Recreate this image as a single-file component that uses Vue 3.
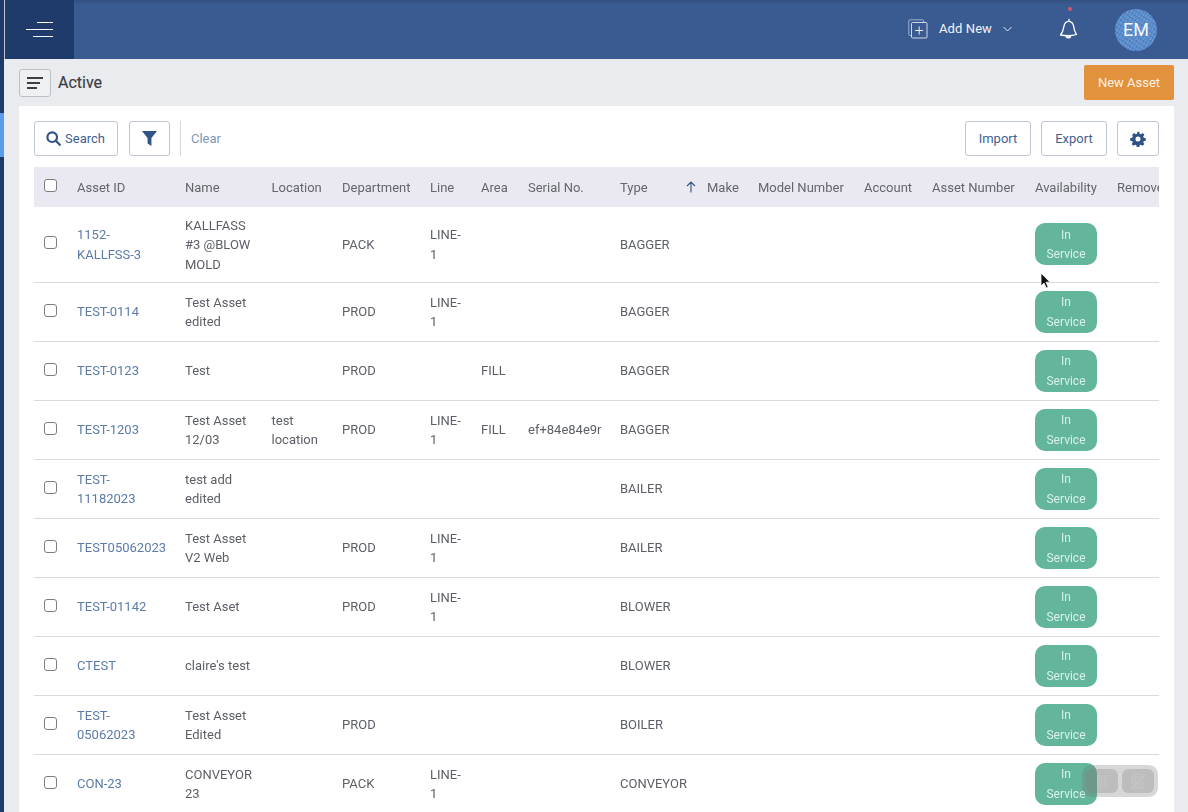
<script setup>
const columns = [
  { label: 'Asset ID', width: 108 },
  { label: 'Name', width: 86.5 },
  { label: 'Location', width: 70.5 },
  { label: 'Department', width: 88 },
  { label: 'Line', width: 51 },
  { label: 'Area', width: 47 },
  { label: 'Serial No.', width: 92 },
  { label: 'Type', width: 71 },
  { label: 'Make', width: 67, sorted: true },
  { label: 'Model Number', width: 106 },
  { label: 'Account', width: 68 },
  { label: 'Asset Number', width: 103 },
  { label: 'Availability', width: 82 },
  { label: 'Remove', width: 100 }
]
const rows = [
  { id: '1152-KALLFSS-3', name: 'KALLFASS #3 @BLOW MOLD', dept: 'PACK', line: 'LINE-1', type: 'BAGGER' },
  { id: 'TEST-0114', name: 'Test Asset edited', dept: 'PROD', line: 'LINE-1', type: 'BAGGER' },
  { id: 'TEST-0123', name: 'Test', dept: 'PROD', area: 'FILL', type: 'BAGGER' },
  { id: 'TEST-1203', name: 'Test Asset 12/03', location: 'test location', dept: 'PROD', line: 'LINE-1', area: 'FILL', serial: 'ef+84e84e9r', type: 'BAGGER' },
  { id: 'TEST-11182023', name: 'test add edited', type: 'BAILER' },
  { id: 'TEST05062023', name: 'Test Asset V2 Web', dept: 'PROD', line: 'LINE-1', type: 'BAILER' },
  { id: 'TEST-01142', name: 'Test Aset', dept: 'PROD', line: 'LINE-1', type: 'BLOWER' },
  { id: 'CTEST', name: "claire's test", type: 'BLOWER' },
  { id: 'TEST-05062023', name: 'Test Asset Edited', dept: 'PROD', type: 'BOILER' },
  { id: 'CON-23', name: 'CONVEYOR 23', dept: 'PACK', line: 'LINE-1', type: 'CONVEYOR' }
]
</script>

<template>
  <div class="app">
    <div class="rail"><div class="rail-active"></div></div>
    <div class="main">
      <header class="topbar">
        <button class="burger" aria-label="Menu">
          <span class="b1"></span><span class="b2"></span><span class="b3"></span>
        </button>
        <div class="top-right">
          <div class="add-new">
            <svg width="20" height="20" viewBox="0 0 20 20" fill="none" stroke="#cfd8e6" stroke-width="1">
              <path d="M3.500 16.500H1.800a1 1 0 0 1-1-1V1.800a1 1 0 0 1 1-1h12.700a1 1 0 0 1 1 1v1.700" stroke="#9fb0ca" />
              <rect x="3.500" y="3.500" width="15.500" height="15.500" rx="1" />
              <path d="M11.200 7.500v8M7.200 11.500h8" stroke="#e8edf5" />
            </svg>
            <span class="add-text">Add New</span>
            <svg class="chev" width="9" height="6" viewBox="0 0 9 6" fill="none" stroke="#dfe6f1" stroke-width="1"><path d="M.5 1l4 4 4-4" /></svg>
          </div>
          <div class="bell">
            <span class="bell-dot"></span>
            <svg width="19" height="22" viewBox="0 0 19 22" fill="none" stroke="#fff" stroke-width="1.300" stroke-linejoin="round">
              <path d="M10 1.500v1.800c2.900.4 4.300 2.400 4.700 5.300.4 3 1 5.600 2.800 7.900-4.500 1.300-10.500 1.500-16 .5 1.900-2.300 2.800-5 3.300-8.200C5.300 5.700 7.300 3.200 10 3.300z" />
              <path d="M7 18.300c1.100 1.700 3.400 1.700 4.600-.2" stroke-width="2" />
            </svg>
          </div>
          <div class="avatar">EM</div>
        </div>
      </header>

      <section class="content">
        <div class="title-row">
          <div class="title-left">
            <button class="toggle" aria-label="Toggle list">
              <span class="t1"></span><span class="t2"></span><span class="t3"></span>
            </button>
            <h1>Active</h1>
          </div>
          <button class="new-asset">New Asset</button>
        </div>

        <div class="panel">
          <div class="toolbar">
            <button class="btn search-btn">
              <svg width="15" height="15" viewBox="0 0 15 15" fill="none" stroke="#2f5288" stroke-width="2.200"><circle cx="6.200" cy="6.200" r="4.800" /><path d="M9.800 9.800l4 4" stroke-linecap="round" /></svg>
              <span>Search</span>
            </button>
            <button class="btn filter-btn" aria-label="Filter">
              <svg width="15" height="15" viewBox="0 0 14 14" fill="#2f5288"><path d="M0 0h14L8.800 6.600V14L5.200 11.600V6.600z" /></svg>
            </button>
            <span class="divider"></span>
            <a class="clear">Clear</a>
            <span class="spacer"></span>
            <button class="btn import-btn">Import</button>
            <button class="btn export-btn">Export</button>
            <button class="btn gear-btn" aria-label="Settings">
              <svg width="16" height="16" viewBox="0 0 24 24" fill="#2f5288"><path fill-rule="evenodd" d="M13.900 1l.5 3c.7.2 1.400.5 2 .9l2.500-1.800 2.700 2.700-1.800 2.500c.4.6.7 1.300.9 2l3 .5v3.800l-3 .5c-.2.7-.5 1.400-.9 2l1.800 2.500-2.700 2.700-2.500-1.800c-.6.4-1.300.7-2 .9l-.5 3h-3.800l-.5-3c-.7-.2-1.400-.5-2-.9l-2.500 1.800-2.700-2.700 1.800-2.500c-.4-.6-.7-1.300-.9-2l-3-.5v-3.800l3-.5c.2-.7.5-1.400.9-2L3.400 5.800l2.700-2.700 2.500 1.800c.6-.4 1.300-.7 2-.9l.5-3zM12 8.200a3.800 3.800 0 1 0 0 7.600 3.800 3.800 0 0 0 0-7.600z" /></svg>
            </button>
          </div>

          <div class="table-wrap">
            <table class="grid">
              <colgroup>
                <col class="check-col" />
                <col v-for="c in columns" :key="c.label" :width="c.width" />
              </colgroup>
              <thead>
                <tr>
                  <th class="check-cell"><span class="checkbox"></span></th>
                  <th v-for="c in columns" :key="c.label">
                    <span v-if="c.sorted" class="sort-arrow">
                      <svg width="10" height="12" viewBox="0 0 10 12" fill="none" stroke="#2f5288" stroke-width="1.100"><path d="M5 11.500V1M1 5l4-4 4 4" /></svg>
                    </span>{{ c.label }}
                  </th>
                </tr>
              </thead>
              <tbody>
                <tr v-for="r in rows" :key="r.id">
                  <td class="check-cell"><span class="checkbox"></span></td>
                  <td><a class="asset-link">{{ r.id }}</a></td>
                  <td>{{ r.name }}</td>
                  <td>{{ r.location }}</td>
                  <td>{{ r.dept }}</td>
                  <td>{{ r.line }}</td>
                  <td>{{ r.area }}</td>
                  <td>{{ r.serial }}</td>
                  <td>{{ r.type }}</td>
                  <td></td>
                  <td></td>
                  <td></td>
                  <td></td>
                  <td class="status-cell"><span class="status">In Service</span></td>
                  <td></td>
                </tr>
              </tbody>
            </table>
          </div>
        </div>
      </section>
    </div>

    <svg class="cursor" width="12" height="18" viewBox="0 0 12 18">
      <path d="M1 1v13l3-3 2.200 5 2-1-2.200-4.800H10z" fill="#111" stroke="#fff" stroke-width=".8" />
    </svg>

    <div class="player">
      <span class="player-btn">
        <svg width="14" height="14" viewBox="0 0 14 14" fill="#c2c2c2"><path d="M2 1h3v12H2zM6 1h1.500v12H6zM9 1h3v12H9z" /></svg>
      </span>
      <span class="player-btn">
        <svg width="20" height="18" viewBox="0 0 20 18" fill="none" stroke="#c4c4c4" stroke-width="1.400"><circle cx="10" cy="8" r="6" /><circle cx="10" cy="8" r="3" /><path d="M4 16h12M3 17L17 2" /></svg>
      </span>
    </div>
  </div>
</template>

<style>
html, body { margin: 0; background: #e9ebee; overflow: hidden; }
</style>

<style scoped>
.app {
  position: relative;
  display: flex;
  height: 812px;
  overflow: hidden;
  font-family: Roboto, "Liberation Sans", sans-serif;
  font-size: 13px;
  color: #5c6066;
  background: #e9ebee;
}
.rail { flex: 0 0 4px; background: #1d3a6b; padding-top: 113px; box-sizing: border-box; }
.rail-active { height: 44px; background: #5b9bea; }
.main { flex: 1; min-width: 0; display: flex; flex-direction: column; }
.topbar {
  flex: 0 0 59px;
  display: flex;
  align-items: center;
  justify-content: space-between;
  background: linear-gradient(#33507f 0, #3a5b92 5px, #3a5b92 100%);
}
.burger {
  width: 70px;
  height: 59px;
  padding: 0;
  border: 0;
  border-left: 1px solid #b9c4d4;
  background: #1e3b6c;
  display: flex;
  flex-direction: column;
  align-items: center;
  justify-content: center;
  gap: 6px;
  box-sizing: border-box;
}
.burger span { display: block; height: 1px; background: #fff; }
.b1 { width: 16px; margin-left: 10px; }
.b2 { width: 27px; }
.b3 { width: 20px; margin-left: 7px; }
.top-right { display: flex; align-items: center; }
.add-new { display: flex; align-items: center; color: #f1f4f9; margin-right: 47px; margin-top: -2px; }
.add-text { margin: 0 11px; font-size: 13px; letter-spacing: .1px; }
.bell { position: relative; width: 19px; height: 22px; margin-right: 37px; margin-top: -1px; }
.bell svg { display: block; }
.bell-dot { position: absolute; left: 9px; top: -11px; width: 4px; height: 4px; border-radius: 50%; background: #d6546a; }
.avatar {
  width: 42px;
  height: 42px;
  margin-right: 31px;
  border-radius: 50%;
  background:
    repeating-linear-gradient(35deg, rgba(30, 70, 140, .22) 0 1px, transparent 1px 4px),
    repeating-linear-gradient(120deg, rgba(190, 215, 245, .18) 0 1px, transparent 1px 3px),
    #5a8ccb;
  color: #f4f7fb;
  font-size: 18px;
  line-height: 42px;
  text-align: center;
}
.content { flex: 1; min-height: 0; padding: 0 14px 0 15px; }
.title-row { height: 47px; display: flex; align-items: center; justify-content: space-between; }
.title-left { display: flex; align-items: center; gap: 7px; }
.toggle {
  width: 32px;
  height: 28px;
  padding: 0 0 0 7px;
  background: #eff0f2;
  border: 1px solid #bcc1c7;
  border-radius: 3px;
  display: flex;
  flex-direction: column;
  justify-content: center;
  align-items: flex-start;
  gap: 3px;
  box-sizing: border-box;
}
.toggle span { display: block; height: 2px; background: #3a3f46; }
.t1 { width: 16px; }
.t2 { width: 13px; }
.t3 { width: 10px; }
h1 { margin: 0; font-size: 16px; font-weight: 400; color: #3c4046; -webkit-text-stroke: .2px #3c4046; }
.new-asset {
  width: 90px;
  height: 35px;
  border: 0;
  border-radius: 2px;
  background: #e2913d;
  color: #fdf3e8;
  font: 13px Roboto, sans-serif;
}
.panel { height: 706px; padding: 15px 15px 0; background: #fff; box-sizing: border-box; overflow: hidden; }
.toolbar { display: flex; align-items: center; height: 35px; margin-bottom: 11px; }
.btn {
  height: 35px;
  padding: 0;
  background: #fff;
  border: 1px solid #bfc7d2;
  border-radius: 3px;
  color: #3f5f92;
  font: 13px Roboto, sans-serif;
  display: flex;
  align-items: center;
  justify-content: center;
  box-sizing: border-box;
}
.search-btn { width: 84px; gap: 4px; margin-right: 11px; padding-right: 1px; }
.filter-btn { width: 41px; margin-right: 10px; }
.divider { width: 1px; height: 35px; background: #d5d8dc; margin-right: 10px; }
.clear { color: #7d97bb; }
.spacer { flex: 1; }
.import-btn { width: 66px; margin-right: 10px; }
.export-btn { width: 66px; margin-right: 10px; }
.gear-btn { width: 42px; }
.table-wrap { width: 1125px; overflow: hidden; }
.grid { width: 1173px; table-layout: fixed; border-collapse: separate; border-spacing: 0; line-height: 19.500px; will-change: transform; }
.check-col { width: 33px; }
th {
  height: 40px;
  padding: 1px 10px 0;
  box-sizing: border-box;
  background: #eae9f1;
  color: #63666b;
  font-weight: 400;
  text-align: left;
  white-space: nowrap;
}
td { padding: 8.500px 10px 7.500px; border-bottom: 1px solid #d9dade; vertical-align: middle; box-sizing: border-box; }
tbody tr { height: 59px; }
td.check-cell, th.check-cell { padding: 0 0 0 10px; }
td.status-cell { padding: 8px 10px; }
.checkbox {
  display: block;
  width: 11px;
  height: 11px;
  border: 1.500px solid #7b7e83;
  border-radius: 3px;
  background: #fff;
}
thead .checkbox { margin-top: -4px; }
tbody .checkbox { margin-top: -3px; }
.asset-link { color: #5b7ba9; }
.sort-arrow { display: inline-block; width: 21px; height: 12px; margin-left: -5px; vertical-align: -1px; }
.sort-arrow svg { display: block; }
.status {
  display: block;
  width: 62px;
  padding: 2.500px 10px .5px;
  border-radius: 10px;
  background: #63b69c;
  color: #d8f0e8;
  font-size: 12px;
  text-align: center;
  box-sizing: border-box;
}
.cursor { position: absolute; left: 1040px; top: 272px; }
.player {
  position: absolute;
  left: 1082px;
  top: 765px;
  width: 76px;
  height: 32px;
  padding: 4px;
  display: flex;
  gap: 4px;
  border-radius: 9px;
  background: rgba(110, 110, 110, .28);
  box-sizing: border-box;
}
.player-btn {
  flex: 1;
  display: flex;
  align-items: center;
  justify-content: center;
  border-radius: 6px;
  background: rgba(130, 130, 130, .3);
}
</style>
